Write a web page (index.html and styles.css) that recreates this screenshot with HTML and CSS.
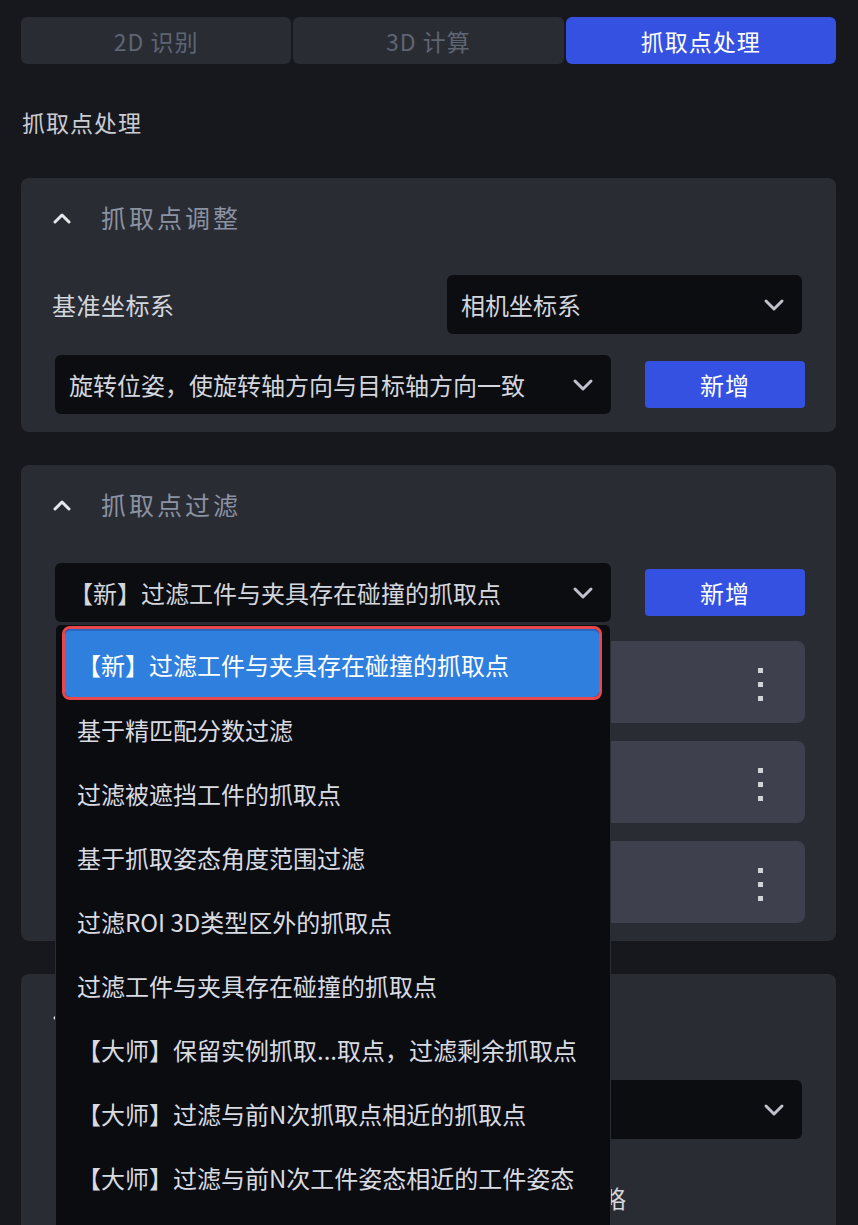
FILE: index.html
```html
<!DOCTYPE html>
<html lang="zh-CN">
<head>
<meta charset="utf-8">
<title>抓取点处理</title>
<link rel="stylesheet" href="styles.css">
</head>
<body>
<div class="page">
  <div class="tabs">
    <div class="tab">2D 识别</div>
    <div class="tab">3D 计算</div>
    <div class="tab active">抓取点处理</div>
  </div>

  <div class="section-label">抓取点处理</div>

  <section class="card">
    <div class="card-head">
      <svg class="chev-up" viewBox="0 0 22 12" width="22" height="12"><path d="M4 10 L11 3 L18 10"/></svg>
      <span class="card-title">抓取点调整</span>
    </div>
    <div class="row row-first">
      <span class="label">基准坐标系</span>
      <div class="select select-sm">
        <span>相机坐标系</span>
        <svg class="chev-down" viewBox="0 0 22 14" width="22" height="14"><path d="M3 3 L11 11 L19 3"/></svg>
      </div>
    </div>
    <div class="row row-next">
      <div class="select select-lg">
        <span>旋转位姿，使旋转轴方向与目标轴方向一致</span>
        <svg class="chev-down" viewBox="0 0 22 14" width="22" height="14"><path d="M3 3 L11 11 L19 3"/></svg>
      </div>
      <button class="btn">新增</button>
    </div>
  </section>

  <section class="card">
    <div class="card-head">
      <svg class="chev-up" viewBox="0 0 22 12" width="22" height="12"><path d="M4 10 L11 3 L18 10"/></svg>
      <span class="card-title">抓取点过滤</span>
    </div>
    <div class="row row-filter">
      <div class="select select-lg select-wrap">
        <span>【新】过滤工件与夹具存在碰撞的抓取点</span>
        <svg class="chev-down" viewBox="0 0 22 14" width="22" height="14"><path d="M3 3 L11 11 L19 3"/></svg>
        <div class="menu">
          <div class="opt sel">【新】过滤工件与夹具存在碰撞的抓取点</div>
          <div class="opt">基于精匹配分数过滤</div>
          <div class="opt">过滤被遮挡工件的抓取点</div>
          <div class="opt">基于抓取姿态角度范围过滤</div>
          <div class="opt">过滤ROI 3D类型区外的抓取点</div>
          <div class="opt">过滤工件与夹具存在碰撞的抓取点</div>
          <div class="opt">【大师】保留实例抓取...取点，过滤剩余抓取点</div>
          <div class="opt">【大师】过滤与前N次抓取点相近的抓取点</div>
          <div class="opt">【大师】过滤与前N次工件姿态相近的工件姿态</div>
        </div>
      </div>
      <button class="btn">新增</button>
    </div>
    <div class="rules">
      <div class="rule"><span class="kebab"><i></i><i></i><i></i></span></div>
      <div class="rule"><span class="kebab"><i></i><i></i><i></i></span></div>
      <div class="rule"><span class="kebab"><i></i><i></i><i></i></span></div>
    </div>
  </section>

  <section class="card card-last">
    <div class="card-head">
      <svg class="chev-up" viewBox="0 0 22 12" width="22" height="12"><path d="M4 10 L11 3 L18 10"/></svg>
    </div>
    <div class="row row-sort">
      <div class="select select-sm">
        <span></span>
        <svg class="chev-down" viewBox="0 0 22 14" width="22" height="14"><path d="M3 3 L11 11 L19 3"/></svg>
      </div>
    </div>
    <div class="note-row">
      <span class="note">排序策略</span>
    </div>
  </section>
</div>
</body>
</html>
```

FILE: styles.css
```css
* { box-sizing: border-box; margin: 0; padding: 0; }

html, body {
  background: #17181e;
}

body {
  font-family: "Noto Sans CJK SC", "Noto Sans", sans-serif;
  font-size: 24px;
  color: #d3d6dc;
  height: 1225px;
  overflow: hidden;
}

.page {
  padding: 17px 22px 0 21px;
}

/* tabs */
.tabs {
  display: grid;
  grid-template-columns: 1fr 1fr 1fr;
  gap: 2px;
  height: 47px;
}

.tab {
  background: #2a2c33;
  border-radius: 6px;
  color: #5e6573;
  display: flex;
  align-items: center;
  justify-content: center;
  font-size: 23px;
  letter-spacing: 1px;
}

.tab.active {
  background: #3451e2;
  color: #ffffff;
}

.section-label {
  margin-top: 42px;
  height: 32px;
  line-height: 32px;
  font-size: 23px;
  letter-spacing: 1px;
  color: #c9ccd3;
  padding-left: 1px;
}

/* cards */
.card {
  background: #2a2c33;
  border-radius: 8px;
  padding: 0 31px 18px 34px;
}

.section-label + .card { margin-top: 40px; }
.card + .card { margin-top: 33px; }

.card-head {
  height: 78px;
  display: flex;
  align-items: center;
  margin-left: -4px;
}

.chev-up {
  flex: none;
  margin-top: 2px;
}
.chev-up path {
  fill: none;
  stroke: #e6e7eb;
  stroke-width: 3;
  stroke-linecap: round;
  stroke-linejoin: round;
}

.card-title {
  margin-left: 28px;
  font-size: 25px;
  letter-spacing: 3px;
  color: #8a92a3;
}

.row {
  display: flex;
  align-items: center;
  justify-content: space-between;
  height: 59px;
}

.row-first { margin-top: 19px; }
.row-next { margin-top: 21px; }
.row-filter { margin-top: 20px; }
.row-sort { margin-top: 28px; justify-content: flex-end; }

.label {
  margin-left: -3px;
  letter-spacing: 0.5px;
}

.select {
  background: #0c0d11;
  border-radius: 6px;
  height: 59px;
  display: flex;
  align-items: center;
  justify-content: space-between;
  padding: 0 17px 0 14px;
  white-space: nowrap;
}

.select-sm {
  width: 355px;
  margin-right: 3px;
}

.select-lg {
  width: 556px;
}

.chev-down { flex: none; }
.chev-down path {
  fill: none;
  stroke: #bfc2cb;
  stroke-width: 3;
  stroke-linecap: round;
  stroke-linejoin: round;
}

.btn {
  width: 160px;
  height: 47px;
  border: none;
  border-radius: 4px;
  background: #3451e2;
  color: #ffffff;
  font-family: inherit;
  font-size: 24px;
  letter-spacing: 1px;
  display: flex;
  align-items: center;
  justify-content: center;
}

/* filter rules */
.rules {
  margin-top: 19px;
  display: flex;
  flex-direction: column;
  gap: 18px;
}

.rule {
  height: 82px;
  background: #3e404e;
  border-radius: 8px;
  display: flex;
  align-items: center;
  justify-content: flex-end;
  padding: 0 42px 0 20px;
}

.kebab {
  display: flex;
  flex-direction: column;
  gap: 9px;
  margin-top: 4px;
}

.kebab i {
  display: block;
  width: 5px;
  height: 5px;
  background: #d0d2d8;
}

/* dropdown menu (overlay) */
.select-wrap { position: relative; }

.menu {
  position: absolute;
  z-index: 10;
  left: 0;
  top: calc(100% + 2px);
  width: 556px;
  height: 660px;
  background: #0b0c10;
  border: 1px solid #2a2c34;
  border-radius: 6px;
  padding-top: 4px;
}

.opt {
  height: 64px;
  display: flex;
  align-items: center;
  padding-left: 21px;
  color: #d8dbe1;
  white-space: nowrap;
}

.opt.sel {
  height: 68px;
  margin: 0 11px 0 9px;
  padding-left: 12px;
  background: #2f7fdf;
  border-top: 2px solid #2866c4;
  color: #ffffff;
  border-radius: 5px;
  outline: 3px solid #e8474b;
}

/* last card */
.card-last {
  padding-bottom: 80px;
}

.note-row {
  margin-top: 43px;
  height: 32px;
  display: flex;
}

.note {
  width: 571px;
  text-align: right;
  line-height: 32px;
  white-space: nowrap;
}
```
